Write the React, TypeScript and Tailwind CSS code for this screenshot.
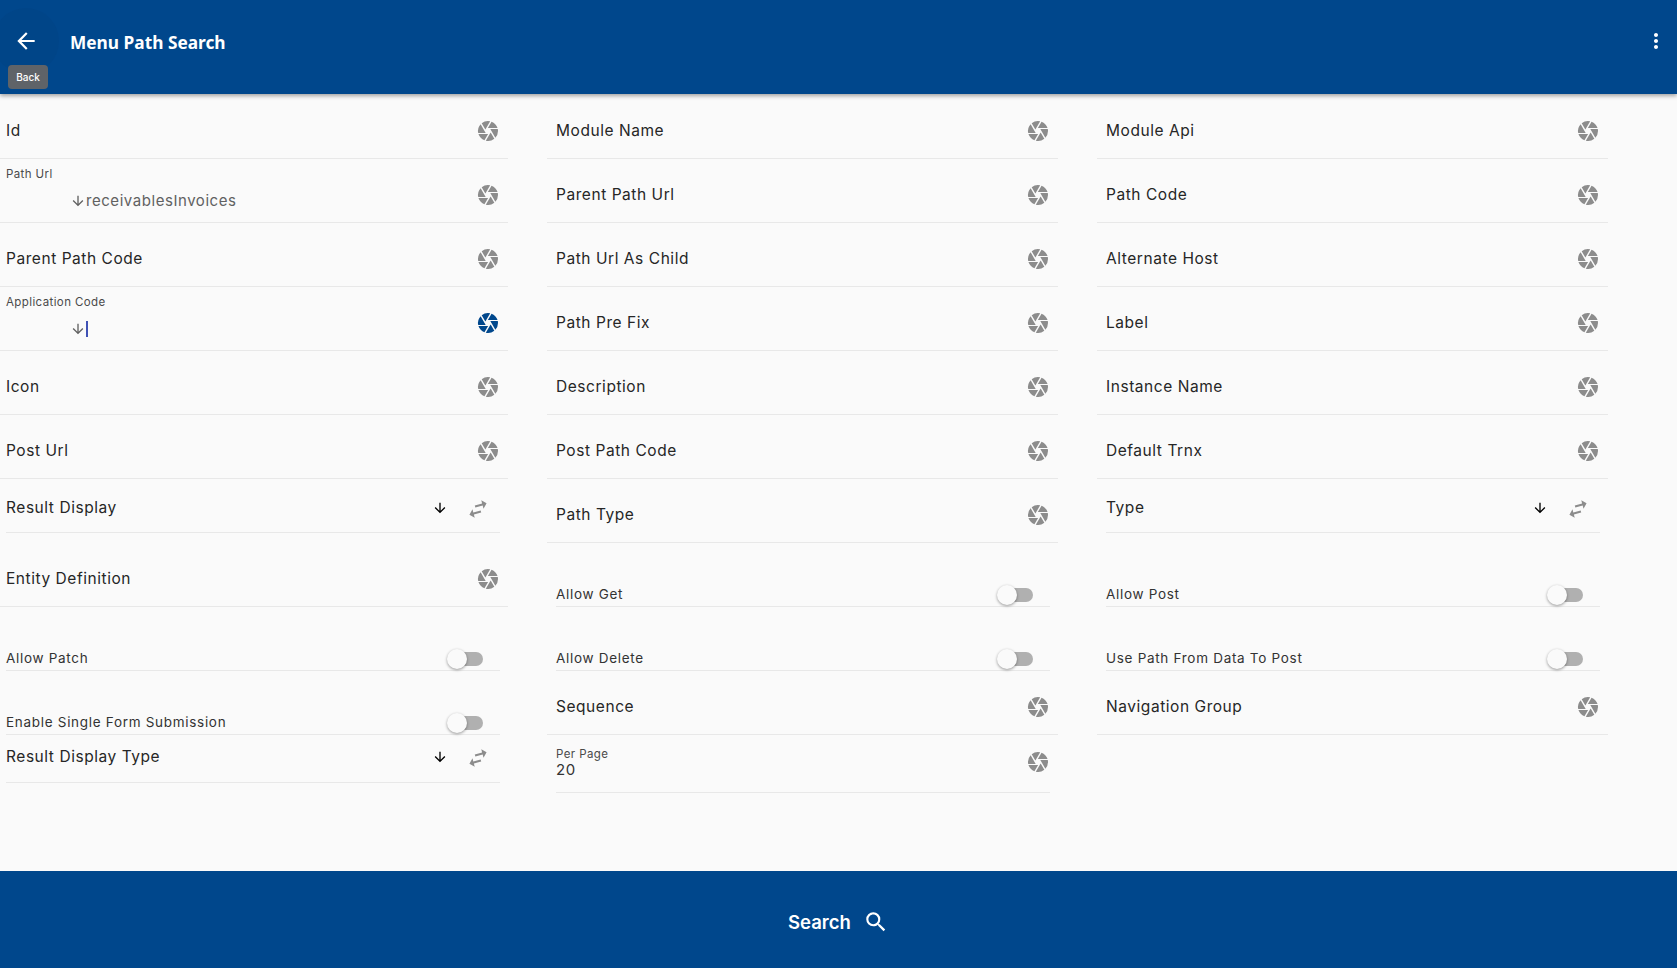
import React from "react";
import { MdArrowBack, MdArrowDownward, MdCamera, MdMoreVert, MdSearch, MdSwapHoriz } from "react-icons/md";

const body = "font-['Inter','Liberation_Sans',sans-serif]";

function TextField({ label, h = 64, pt = 8, active = false }: { label: string; h?: number; pt?: number; active?: boolean }) {
  return (
    <div className="flex shrink-0 items-center border-b border-[#e8e8e8] pl-[9px] pr-[8px]" style={{ height: h, paddingTop: pt }}>
      <span className="flex-1 text-[15.5px] tracking-[0.55px] text-[#262626]">{label}</span>
      <MdCamera size={24} className={active ? "text-[#00478c]" : "text-[#8c8c8c]"} />
    </div>
  );
}

function FloatField({ label, value, active = false, caret = false }: { label: string; value?: string; active?: boolean; caret?: boolean }) {
  return (
    <div className="flex h-[64px] shrink-0 items-center border-b border-[#e8e8e8] pl-[9px] pr-[8px] pt-[8px]">
      <div className="flex-1 self-start">
        <div className="text-[11.5px] leading-[14px] tracking-[0.4px] text-[#4a4a4a]">{label}</div>
        <div className="mt-[10px] flex h-[20px] items-center pl-[64px] text-[15px] tracking-[0.55px] text-[#616161]">
          <MdArrowDownward size={16} className="-mt-[1px] text-[#616161]" />
          {value && <span>{value}</span>}
          {caret && <span className="h-[16px] w-[2px] bg-[#3f51b5]" />}
        </div>
      </div>
      <MdCamera size={24} className={active ? "text-[#00478c]" : "text-[#8c8c8c]"} />
    </div>
  );
}

function SelectField({ label, h = 54, pt = 4, pb = 0 }: { label: string; h?: number; pt?: number; pb?: number }) {
  return (
    <div className="ml-[9px] mr-[8px] flex shrink-0 items-center border-b border-[#e8e8e8]" style={{ height: h, paddingTop: pt, paddingBottom: pb }}>
      <span className="flex-1 text-[15.5px] tracking-[0.55px] text-[#262626]">{label}</span>
      <MdArrowDownward size={16} className="mr-[17px]" />
      <MdSwapHoriz size={26} className="mr-[9px] mt-[2px] -rotate-[15deg] text-[#8c8c8c]" />
    </div>
  );
}

function Toggle({ label, h = 64 }: { label: string; h?: number }) {
  return (
    <div className="ml-[9px] mr-[8px] flex shrink-0 items-end border-b border-[#e8e8e8]" style={{ height: h }}>
      <span className="flex-1 pb-[2px] text-[13.5px] leading-[20px] tracking-[0.7px] text-[#333]">{label}</span>
      <div className="relative mb-[4px] mr-[17px] h-[14px] w-[33px] rounded-full bg-[#b0b0b0]">
        <div className="absolute -left-[3px] -top-[3px] h-[20px] w-[20px] rounded-full bg-[#fafafa] shadow-[0_1px_3px_rgba(0,0,0,0.4)]" />
      </div>
    </div>
  );
}

export default function App() {
  return (
    <div className={`${body} flex h-[968px] w-[1677px] flex-col overflow-hidden bg-[#fafafa]`}>
      <header className="relative z-10 flex h-[94px] shrink-0 items-center bg-[#00478c] shadow-[0_2px_4px_rgba(0,0,0,0.35)]">
        <div className="absolute left-[-7px] top-[8px] flex h-[66px] w-[66px] items-center justify-center rounded-full bg-[#004588]">
          <MdArrowBack size={26} className="text-white" />
        </div>
        <div className="absolute left-[8px] top-[65px] flex h-[24px] w-[40px] items-center justify-center rounded-[4px] bg-[#5f6368] text-[10px] font-medium text-white">
          Back
        </div>
        <h1 className="ml-[70px] -mt-[9px] font-['Noto_Sans',sans-serif] text-[17.3px] font-bold text-white">Menu Path Search</h1>
        <MdMoreVert size={24} className="absolute right-[9px] top-[29px] text-white" />
      </header>

      <main className="-ml-[3px] flex flex-1 gap-[39px] pt-[1px]">
        <div className="flex w-[511px] flex-col">
          <TextField label="Id" />
          <FloatField label="Path Url" value="receivablesInvoices" />
          <TextField label="Parent Path Code" />
          <FloatField label="Application Code" caret active />
          <TextField label="Icon" />
          <TextField label="Post Url" />
          <SelectField label="Result Display" />
          <TextField label="Entity Definition" h={74} pt={18} />
          <Toggle label="Allow Patch" />
          <Toggle label="Enable Single Form Submission" />
          <SelectField label="Result Display Type" h={48} pt={0} pb={4} />
        </div>
        <div className="flex w-[511px] flex-col">
          <TextField label="Module Name" />
          <TextField label="Parent Path Url" />
          <TextField label="Path Url As Child" />
          <TextField label="Path Pre Fix" />
          <TextField label="Description" />
          <TextField label="Post Path Code" />
          <TextField label="Path Type" />
          <Toggle label="Allow Get" />
          <Toggle label="Allow Delete" />
          <TextField label="Sequence" />
          <div className="ml-[9px] mr-[8px] flex h-[58px] shrink-0 items-center border-b border-[#e8e8e8] pb-[1px]">
            <div className="flex-1">
              <div className="text-[11.5px] leading-[14px] tracking-[0.4px] text-[#4a4a4a]">Per Page</div>
              <div className="text-[15px] leading-[18px] tracking-[0.55px] text-[#333]">20</div>
            </div>
            <MdCamera size={24} className="-mt-[2px] text-[#8c8c8c]" />
          </div>
        </div>
        <div className="flex w-[511px] flex-col">
          <TextField label="Module Api" />
          <TextField label="Path Code" />
          <TextField label="Alternate Host" />
          <TextField label="Label" />
          <TextField label="Instance Name" />
          <TextField label="Default Trnx" />
          <SelectField label="Type" />
          <div className="h-[10px] shrink-0" />
          <Toggle label="Allow Post" />
          <Toggle label="Use Path From Data To Post" />
          <TextField label="Navigation Group" />
        </div>
      </main>

      <footer className="flex h-[97px] shrink-0 items-center justify-center gap-[12px] bg-[#00478c] pt-[6px] text-white">
        <span className="text-[18.5px] font-semibold">Search</span>
        <MdSearch size={26} className="-mt-[2px]" />
      </footer>
    </div>
  );
}
